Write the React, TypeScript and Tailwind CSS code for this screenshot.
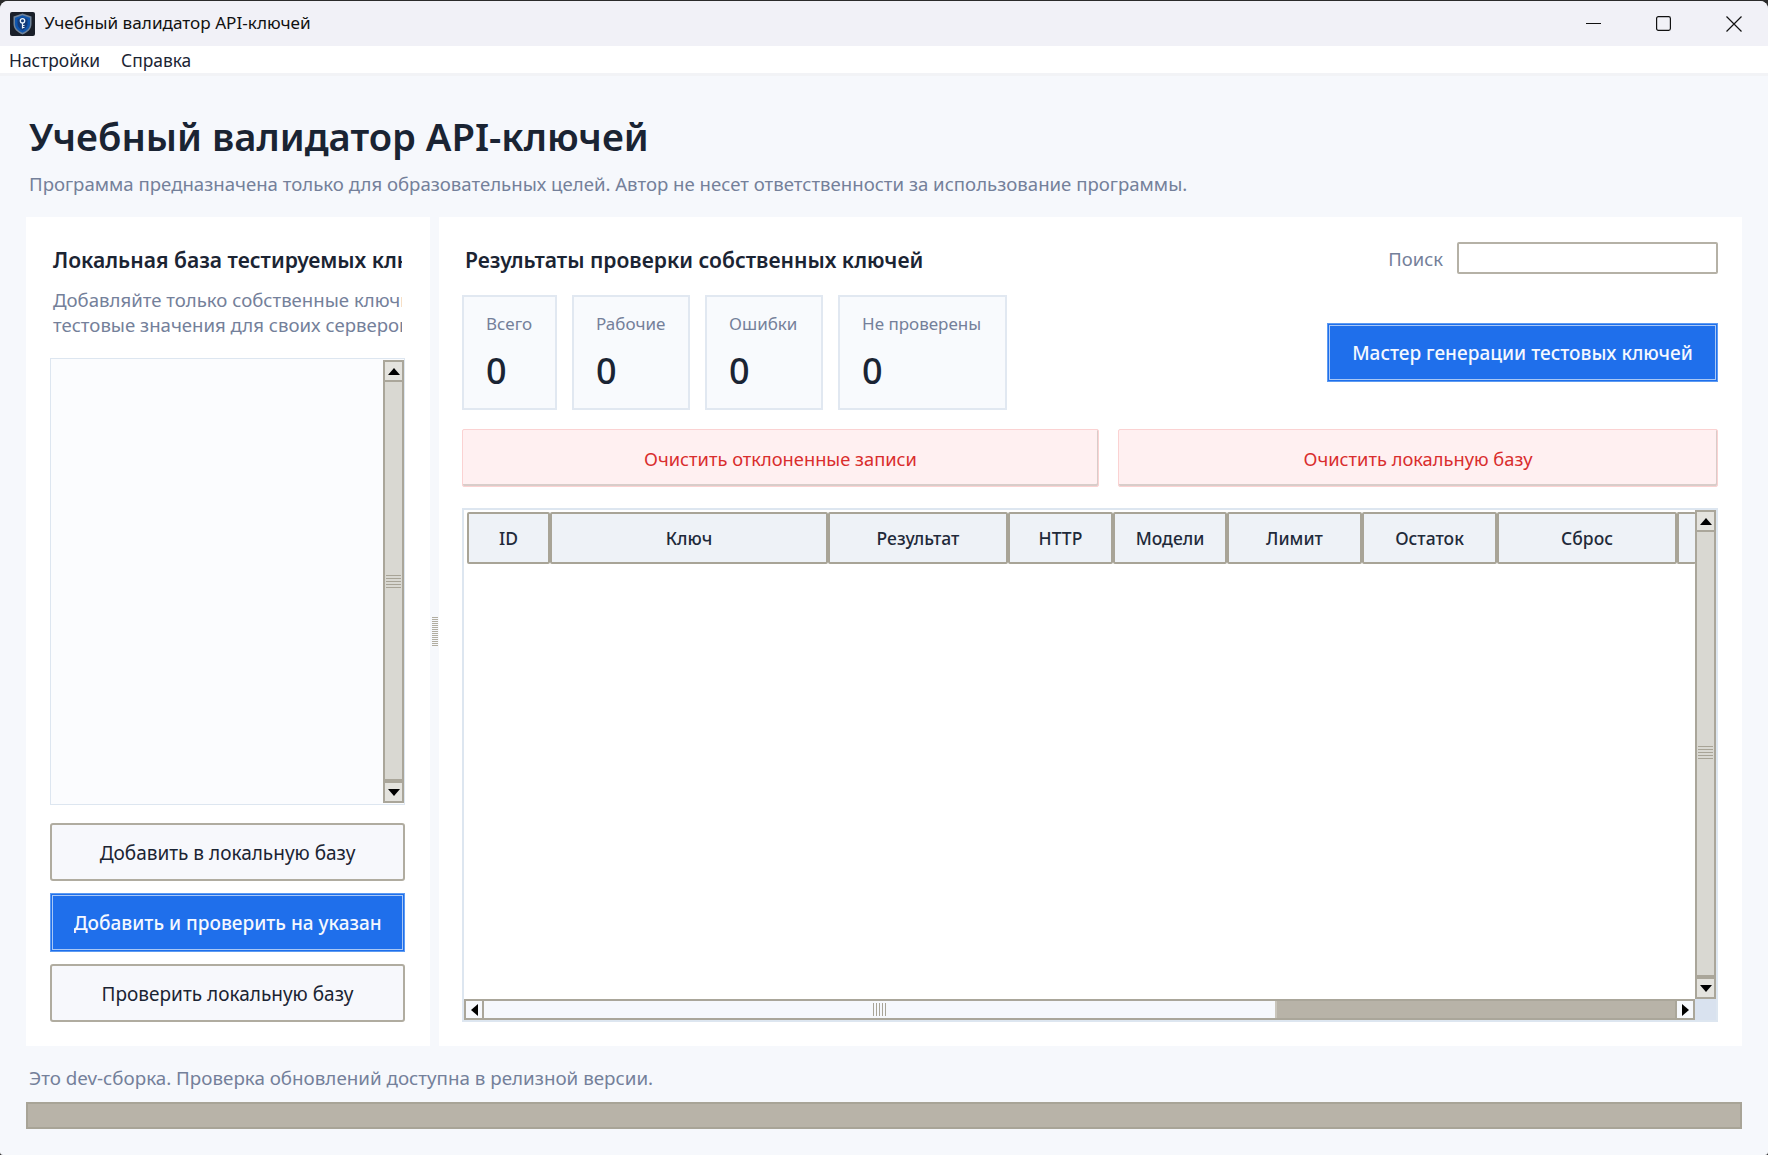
import React from "react"

const font = "font-['Noto_Sans','Liberation_Sans',sans-serif]"

const stats = [
  { label: "Всего", value: "0", width: "w-[95px]" },
  { label: "Рабочие", value: "0", width: "w-[118px]" },
  { label: "Ошибки", value: "0", width: "w-[118px]" },
  { label: "Не проверены", value: "0", width: "w-[169px]" },
]

const columns = [
  { title: "ID", width: "w-[83px]" },
  { title: "Ключ", width: "w-[278px]" },
  { title: "Результат", width: "w-[180px]" },
  { title: "HTTP", width: "w-[105px]" },
  { title: "Модели", width: "w-[114px]" },
  { title: "Лимит", width: "w-[135px]" },
  { title: "Остаток", width: "w-[135px]" },
  { title: "Сброс", width: "w-[180px]" },
  { title: "", width: "w-[19px]" },
]

const Arrow: React.FC<{ dir: "up" | "down" | "left" | "right" }> = ({ dir }) => {
  const points = {
    up: "0,7 12,7 6,0",
    down: "0,0 12,0 6,7",
    left: "7,0 7,12 0,6",
    right: "0,0 0,12 7,6",
  }[dir]
  const vertical = dir === "up" || dir === "down"
  return (
    <svg width={vertical ? 12 : 7} height={vertical ? 7 : 12} viewBox={vertical ? "0 0 12 7" : "0 0 7 12"}>
      <polygon points={points} fill="#000" />
    </svg>
  )
}

const ScrollButton: React.FC<{ dir: "up" | "down" | "left" | "right"; className?: string }> = ({ dir, className }) => (
  <div className={`flex shrink-0 items-center justify-center border-2 border-[#aaa69a] ${className ?? ""}`}>
    <Arrow dir={dir} />
  </div>
)

const VerticalScrollbar: React.FC<{ className?: string; gripOffset: string }> = ({ className, gripOffset }) => (
  <div className={`flex w-[21px] shrink-0 flex-col bg-[#d9d8d2] ${className ?? ""}`}>
    <ScrollButton dir="up" className="h-[22px] bg-[#e4e3de]" />
    <div className={`flex min-h-0 flex-1 flex-col justify-start border-x-2 border-b-2 border-[#aaa69a] ${gripOffset}`}>
      <div className="mx-[1px] flex flex-col gap-[2px]">
        <div className="h-[1px] bg-[#a8a497]" />
        <div className="h-[1px] bg-[#a8a497]" />
        <div className="h-[1px] bg-[#a8a497]" />
        <div className="h-[1px] bg-[#a8a497]" />
        <div className="h-[1px] bg-[#a8a497]" />
      </div>
    </div>
    <ScrollButton dir="down" className="h-[22px] bg-[#e4e3de]" />
  </div>
)

const AppIcon = () => (
  <svg width="25" height="24" viewBox="0 0 25 24">
    <rect width="25" height="24" rx="2" fill="#1a1f29" />
    <path d="M12.5 1.5 L21.5 4.5 V12 C21.5 17 17.5 20.5 12.5 22.5 C7.5 20.5 3.5 17 3.5 12 V4.5 Z" fill="#6f8298" />
    <path d="M12.5 3.3 L20 5.8 V12 C20 16.2 16.8 19 12.5 20.8 C8.2 19 5 16.2 5 12 V5.8 Z" fill="#0f55ad" />
    <path d="M12.5 5.5 L17.5 7 V12 C17.5 15 15.2 17 12.5 18.4 C9.8 17 7.5 15 7.5 12 V7 Z" fill="#123a78" />
    <circle cx="12.5" cy="8.8" r="2.2" fill="none" stroke="#e8f2fb" strokeWidth="1.3" />
    <path d="M12.5 11 V16.5 M12.5 13.5 H14.5 M12.5 15.5 H14.5" stroke="#e8f2fb" strokeWidth="1.2" fill="none" />
  </svg>
)

const GhostButton: React.FC<{ children: React.ReactNode }> = ({ children }) => (
  <button className="flex h-[58px] w-[355px] items-center justify-center rounded-[3px] border-2 border-[#b0aca0] bg-[#f7f8fc] pt-[3px] text-[19px] text-[#1b2433]">
    {children}
  </button>
)

const PrimaryFrame: React.FC<{ className?: string; children: React.ReactNode }> = ({ className, children }) => (
  <button
    className={`flex h-[59px] items-center justify-center border border-[#5c9af2] bg-[#1f6feb] pt-[2px] text-[19px] font-medium text-[#f4f8ff] shadow-[inset_0_0_0_1px_#1f6feb,inset_0_0_0_2px_#a9c8f6] ${className ?? ""}`}
  >
    {children}
  </button>
)

const DangerButton: React.FC<{ className: string; children: React.ReactNode }> = ({ className, children }) => (
  <button
    className={`flex h-[58px] items-center justify-center rounded-[2px] border border-[#fbd2d2] bg-[#fff0f1] pt-[1px] text-[18.3px] text-[#d92d2d] shadow-[inset_-1px_-2px_0_#d8cdca] ${className}`}
  >
    {children}
  </button>
)

export default function App() {
  return (
    <div className={`h-[1155px] w-[1768px] overflow-hidden bg-[#2b2b2b] pt-[1px] ${font}`}>
      <div className="flex h-[1154px] flex-col overflow-hidden rounded-t-[8px] rounded-b-[3px] bg-[#f6f8fc]">
        {/* title bar */}
        <div className="flex h-[45px] shrink-0 items-center bg-[#f1f1f7] pl-[10px]">
          <AppIcon />
          <span className="mb-[1px] ml-[9px] text-[17.15px] text-[#111]">Учебный валидатор API-ключей</span>
          <div className="ml-auto flex items-center gap-[55px] pr-[26px]">
            <svg width="15" height="15" viewBox="0 0 15 15">
              <path d="M0 7.5 H15" stroke="#111" strokeWidth="1.1" />
            </svg>
            <svg width="15" height="15" viewBox="0 0 15 15">
              <rect x="0.6" y="0.6" width="13.8" height="13.8" rx="1.8" fill="none" stroke="#111" strokeWidth="1.2" />
            </svg>
            <svg width="16" height="16" viewBox="0 0 16 16">
              <path d="M0.5 0.5 L15.5 15.5 M15.5 0.5 L0.5 15.5" stroke="#111" strokeWidth="1.2" />
            </svg>
          </div>
        </div>

        {/* menu */}
        <div className="flex h-[27px] shrink-0 items-center gap-[21px] bg-white pl-[9px] pt-[2px] text-[17.4px] text-[#1b2433]">
          <span>Настройки</span>
          <span>Справка</span>
        </div>
        <div className="h-[3px] shrink-0 bg-[#f2f3f6]" />

        <div className="flex min-h-0 flex-1 flex-col px-[26px]">
          <h1 className="ml-[3px] mt-[34px] text-[38.2px] leading-[52px] font-semibold text-[#1a2433]">
            Учебный валидатор API-ключей
          </h1>
          <p className="ml-[3px] mt-[9px] text-[18.6px] leading-[26px] text-[#74809a]">
            Программа предназначена только для образовательных целей. Автор не несет ответственности за использование программы.
          </p>

          <div className="mt-[20px] flex h-[829px] shrink-0">
            {/* left panel */}
            <div className="flex w-[404px] shrink-0 flex-col bg-white pl-[24px] pt-[27px]">
              <div className="w-[352px] overflow-hidden pl-[3px]">
                <h2 className="whitespace-nowrap text-[21.1px] leading-[32px] font-semibold text-[#1b2433]">
                  Локальная база тестируемых ключей
                </h2>
                <p className="mt-[11px] whitespace-nowrap text-[18.6px] leading-[25px] text-[#74809a]">
                  Добавляйте только собственные ключи и
                </p>
                <p className="whitespace-nowrap text-[18.6px] leading-[25px] text-[#74809a]">
                  тестовые значения для своих серверов
                </p>
              </div>

              <div className="mt-[21px] flex h-[447px] w-[355px] shrink-0 justify-end border border-[#dde6f0] bg-[#fbfcfe] py-[1px]">
                <VerticalScrollbar gripOffset="pt-[193px]" />
              </div>

              <div className="mt-[18px] flex flex-col gap-[12px]">
                <GhostButton>Добавить в локальную базу</GhostButton>
                <PrimaryFrame className="w-[355px]">
                  <span className="block w-[308px] overflow-hidden whitespace-nowrap text-left">
                    Добавить и проверить на указанном сервере
                  </span>
                </PrimaryFrame>
                <GhostButton>Проверить локальную базу</GhostButton>
              </div>
            </div>

            {/* splitter */}
            <div className="flex w-[9px] shrink-0 items-center justify-center">
              <div className="flex w-[6px] flex-col gap-[1px]">
                {Array.from({ length: 15 }).map((_, i) => (
                  <div key={i} className="h-[1px] bg-[#b0aca0]" />
                ))}
              </div>
            </div>

            {/* right panel */}
            <div className="flex min-w-0 flex-1 flex-col bg-white pl-[23px] pr-[24px]">
              <div className="flex h-[78px] shrink-0 items-start pt-[27px]">
                <h2 className="ml-[3px] text-[21.1px] leading-[32px] font-semibold text-[#1b2433]">
                  Результаты проверки собственных ключей
                </h2>
                <span className="ml-auto text-[18.4px] leading-[30px] text-[#74809a]">Поиск</span>
                <input className="ml-[14px] mt-[-2px] h-[32px] w-[261px] rounded-[2px] border-2 border-[#b5b1a6] bg-white" />
              </div>

              <div className="flex h-[115px] shrink-0 items-start gap-[15px]">
                {stats.map((s) => (
                  <div key={s.label} className={`${s.width} h-[115px] border-2 border-[#e1e8f1] bg-[#f8fafd] pl-[22px] pt-[14px]`}>
                    <div className="whitespace-nowrap text-[17px] leading-[26px] text-[#74809a]">{s.label}</div>
                    <div className="mt-[10px] text-[36px] leading-[48px] font-medium text-[#1a2433]">{s.value}</div>
                  </div>
                ))}
                <PrimaryFrame className="ml-auto mt-[28px] w-[391px]">
                  Мастер генерации тестовых ключей
                </PrimaryFrame>
              </div>

              <div className="mt-[19px] flex shrink-0 gap-[19px]">
                <DangerButton className="w-[637px]">Очистить отклоненные записи</DangerButton>
                <DangerButton className="flex-1">Очистить локальную базу</DangerButton>
              </div>

              {/* table */}
              <div className="mt-[21px] flex h-[514px] shrink-0 flex-col border-2 border-[#dde6f0] bg-white">
                <div className="flex min-h-0 flex-1">
                  <div className="flex min-w-0 flex-1 flex-col pl-[3px] pt-[2px]">
                    <div className="flex">
                      {columns.map((c, i) => (
                        <div
                          key={i}
                          className={`${c.width} flex h-[52px] shrink-0 items-center justify-center rounded-[2px] border-2 border-[#a8a497] bg-[#eef2f7] pt-[1px] text-[17.5px] font-medium text-[#1f2a3a] ${
                            i === columns.length - 1 ? "border-r-0" : ""
                          }`}
                        >
                          {c.title}
                        </div>
                      ))}
                    </div>
                  </div>
                  <VerticalScrollbar gripOffset="pt-[214px]" />
                </div>
                {/* horizontal scrollbar */}
                <div className="flex h-[21px] shrink-0">
                  <div className="flex min-w-0 flex-1 border-y-2 border-[#aaa69a] bg-[#b8b3a8]">
                    <ScrollButton dir="left" className="-my-[2px] h-[21px] w-[20px] bg-[#f6f8fc]" />
                    <div className="flex w-[793px] shrink-0 justify-center border-r-2 border-[#c9c5bb] bg-[#f6f8fc]">
                      <div className="flex h-full items-center gap-[2px] py-[2px]">
                        {Array.from({ length: 5 }).map((_, i) => (
                          <div key={i} className="h-full w-[1px] bg-[#a8a497]" />
                        ))}
                      </div>
                    </div>
                    <ScrollButton dir="right" className="-my-[2px] ml-auto h-[21px] w-[20px] bg-[#f6f8fc]" />
                  </div>
                  <div className="w-[21px] shrink-0 bg-[#d9e2ef]" />
                </div>
              </div>
            </div>
          </div>

          <p className="ml-[3px] mt-[19px] text-[18.8px] leading-[26px] text-[#74809a]">
            Это dev-сборка. Проверка обновлений доступна в релизной версии.
          </p>
          <div className="mt-[11px] h-[27px] shrink-0 border-2 border-[#a8a497] bg-[#b8b3a8]" />
        </div>
      </div>
    </div>
  )
}
